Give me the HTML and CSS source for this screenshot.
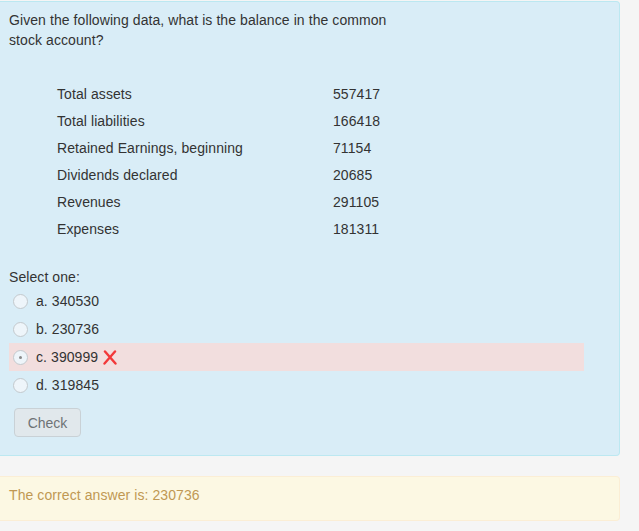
FILE: index.html
```html
<!DOCTYPE html>
<html>
<head>
<meta charset="utf-8">
<link rel="stylesheet" href="styles.css">
</head>
<body>
<div class="que">
  <p class="qtext">Given the following data, what is the balance in the common stock account?</p>
  <div class="data">
    <span>Total assets</span><span>557417</span>
    <span>Total liabilities</span><span>166418</span>
    <span>Retained Earnings, beginning</span><span>71154</span>
    <span>Dividends declared</span><span>20685</span>
    <span>Revenues</span><span>291105</span>
    <span>Expenses</span><span>181311</span>
  </div>
  <div class="prompt">Select one:</div>
  <div class="answers">
    <div class="opt"><span class="radio"></span><span>a. 340530</span></div>
    <div class="opt"><span class="radio"></span><span>b. 230736</span></div>
    <div class="opt incorrect"><span class="radio checked"></span><span>c. 390999</span>
      <svg class="xicon" width="14" height="15" viewBox="0 0 14 15"><path d="M2 1.5 L12.5 13.5 M12 1.5 L1.5 13.5" stroke="#f2383a" stroke-width="2.4" stroke-linecap="round" fill="none"/></svg>
    </div>
    <div class="opt"><span class="radio"></span><span>d. 319845</span></div>
  </div>
  <button class="check">Check</button>
</div>
<div class="feedback">The correct answer is: 230736</div>
</body>
</html>
```
FILE: styles.css
```css
html, body {
  margin: 0;
  padding: 0;
}
body {
  background: #f5f5f5;
  font-family: "Liberation Sans", Arial, sans-serif;
  font-size: 14px;
  line-height: 20px;
  letter-spacing: 0.08px;
  color: #333;
}
.que {
  margin: 1px 19px 0 0;
  background: #d9edf7;
  border: 1px solid #bce8f1;
  border-left: 0;
  border-radius: 0 4px 4px 0;
  padding: 8px 35px 18px 9px;
}
.qtext {
  margin: 0;
  max-width: 400px;
}
.data {
  display: grid;
  grid-template-columns: 276px auto;
  grid-auto-rows: 27px;
  align-items: center;
  margin: 30px 0 0 48px;
}
.prompt {
  margin-top: 25px;
}
.opt {
  display: flex;
  align-items: center;
  height: 28px;
  padding-left: 4px;
}
.opt.incorrect {
  background: #f2dede;
}
.radio {
  width: 13px;
  height: 13px;
  border-radius: 50%;
  border: 1px solid #c3c9cd;
  background: #eef5fa;
  margin-right: 8px;
  position: relative;
  box-sizing: content-box;
}
.radio.checked::after {
  content: "";
  position: absolute;
  left: 5px;
  top: 5px;
  width: 3px;
  height: 3px;
  border-radius: 50%;
  background: #8a8a8a;
}
.xicon {
  margin-left: 5px;
}
.check {
  display: block;
  margin: 9px 0 0 5px;
  width: 67px;
  height: 29px;
  padding: 0;
  background: #e1e8ec;
  border: 1px solid #c9d1d6;
  border-radius: 4px;
  font-family: "Liberation Sans", Arial, sans-serif;
  font-size: 14px;
  color: #6e7376;
}
.feedback {
  margin: 20px 19px 0 0;
  background: #fcf8e3;
  border: 1px solid #fbeed5;
  border-left: 0;
  border-radius: 0 4px 4px 0;
  padding: 8px 9px 15px 9px;
  color: #c09853;
}
```
